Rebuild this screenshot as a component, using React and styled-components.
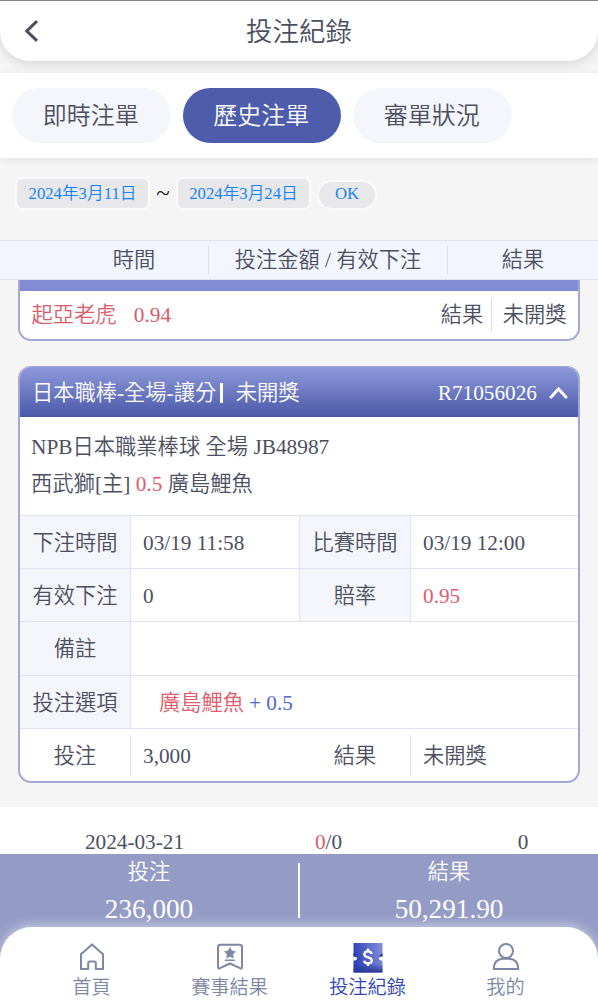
import React from "react";
import styled, { createGlobalStyle } from "styled-components";

const Global = createGlobalStyle`
  * { box-sizing: border-box; }
  html, body { margin: 0; padding: 0; }
  body {
    background: #f5f5f5;
    color: #4c4f5f;
    font-family: "Liberation Serif", "Noto Sans CJK TC", serif;
    font-weight: 350;
    font-size: 21.25px;
    line-height: 30px;
    overflow: hidden;
  }
  button { font: inherit; color: inherit; border: 0; padding: 0; }
`;

const Screen = styled.div`
  width: 598px;
  height: 1000px;
  display: flex;
  flex-direction: column;
  overflow: hidden;
  border-top: 1px solid #858488;
`;

const Header = styled.header`
  display: grid;
  grid-template-columns: 60px 1fr 60px;
  align-items: center;
  flex: none;
  height: 60px;
  background: #fff;
  border-radius: 0 0 30px 30px;
  box-shadow: 0 3px 12px rgba(0, 0, 0, 0.13);
`;

const BackButton = styled.button`
  display: flex;
  background: none;
  padding-left: 24px;
`;

const Title = styled.h1`
  margin: 0;
  padding-top: 2px;
  font-size: 26.5px;
  font-weight: 350;
  text-align: center;
`;

const Tabs = styled.nav`
  display: flex;
  flex: none;
  gap: 12px;
  height: 85px;
  margin-top: 12px;
  padding: 15px 12px;
  background: #fff;
  box-shadow: 0 2px 8px rgba(0, 0, 0, 0.08);
`;

const Tab = styled.button`
  width: 158.5px;
  height: 55px;
  padding-right: 1px;
  border-radius: 28px;
  font-size: 24px;
  background: ${(p) => (p.$active ? "#4e5cac" : "#f5f6fc")};
  color: ${(p) => (p.$active ? "#fff" : "#4c4f5f")};
`;

const Filter = styled.div`
  display: flex;
  align-items: flex-end;
  flex: none;
  height: 52px;
  padding-left: 15px;
  font-size: 16.7px;
`;

const FilterButton = styled.button`
  width: ${(p) => (p.$round ? 60 : 135)}px;
  height: ${(p) => (p.$round ? 30 : 33)}px;
  margin-left: ${(p) => (p.$round ? 6 : 0)}px;
  padding-bottom: ${(p) => (p.$round ? 2 : 0)}px;
  border: 2px solid #fafafa;
  border-radius: ${(p) => (p.$round ? 15 : 7)}px;
  background: #e8e8ea;
  color: #1583fb;
  line-height: ${(p) => (p.$round ? 24 : 29)}px;
`;

const Tilde = styled.span`
  width: 26px;
  text-align: center;
  color: #222;
  font-size: 25px;
  line-height: 34px;
`;

const Columns = styled.div`
  display: grid;
  grid-template-columns: 209px 239px 150px;
  align-items: center;
  flex: none;
  height: 40px;
  margin-top: 30px;
  background: #f3f6fe;
  border: solid #dfe2f5;
  border-width: 1px 0;
`;

const Column = styled.div`
  height: 28px;
  line-height: 28px;
  text-align: center;
  padding-left: ${(p) => p.$indent || 0}px;
  border-right: ${(p) => (p.$last ? 0 : 1)}px solid #d9dcf1;
`;

const Card = styled.section`
  flex: none;
  width: 562px;
  margin: ${(p) => (p.$continued ? "0" : "25px")} 0 0 18px;
  border: 2px solid #a2a8d3;
  border-top-width: ${(p) => (p.$continued ? 0 : 1)}px;
  border-radius: ${(p) => (p.$continued ? "0 0 13px 13px" : "13px")};
  background: #fff;
  overflow: hidden;
`;

const CardStrip = styled.div`
  height: 11px;
  background: #818cd5;
`;

const CardResult = styled.div`
  display: flex;
  align-items: center;
  height: 48px;
  padding: 0 11.5px;
`;

const Pick = styled.span`
  flex: 1;
  color: #da5b6b;
  word-spacing: 12px;
`;

const Outcome = styled.span`
  padding-left: 11px;
  margin-left: 7.5px;
  border-left: 1px solid #d9dcf1;
  line-height: 34px;
`;

const CardHeader = styled.div`
  display: flex;
  align-items: center;
  height: 50px;
  padding: 2px 10px 0 12px;
  color: #fff;
  background: linear-gradient(#8e99dc, #7480c6 40%, #4958a9);
`;

const Divider = styled.i`
  width: 3px;
  height: 20px;
  margin: 0 12.5px 0 4px;
  background: #fff;
`;

const TicketNo = styled.span`
  margin-left: auto;
  padding-right: 12px;
`;

const Match = styled.div`
  height: 98px;
  padding: 12px 11px;
  font-size: 21.3px;
  line-height: 37px;
`;

const Red = styled.span`
  color: #e25a6c;
`;

const Blue = styled.span`
  color: #5065e0;
`;

const Row = styled.div`
  display: grid;
  grid-template-columns: ${(p) => (p.$wide ? "111px 1fr" : "111px 169px 111px 1fr")};
  height: 53.2px;
  border-top: 1px solid #dfe1f7;
  ${(p) => p.$plain && "padding: 5px 0;"}
`;

const Label = styled.div`
  display: flex;
  align-items: center;
  justify-content: center;
  padding-top: 2px;
  background: ${(p) => (p.$plain ? "#fff" : "#f5f6fb")};
  border-right: 1px solid #dfe1f7;
`;

const Value = styled.div`
  display: flex;
  align-items: center;
  gap: 5px;
  padding: 2px 0 0 ${(p) => p.$indent || 12}px;
  border-right: ${(p) => (p.$line ? 1 : 0)}px solid #dfe1f7;
`;

const DayRow = styled.div`
  display: grid;
  grid-template-columns: 209px 239px 150px;
  align-items: end;
  flex: none;
  height: 47px;
  margin-top: 24px;
  background: #fff;
`;

const DayCell = styled.div`
  text-align: center;
  line-height: 24px;
  padding-left: ${(p) => p.$indent || 0}px;
`;

const Summary = styled.div`
  display: flex;
  flex: none;
  height: 147px;
  background: #949bc5;
  color: #fff;
`;

const Total = styled.div`
  flex: 1;
  padding-top: 3px;
  text-align: center;
`;

const Amount = styled.div`
  margin-top: 7px;
  font-size: 27.2px;
`;

const SummaryLine = styled.div`
  width: 2px;
  height: 55px;
  margin-top: 9px;
  background: #fff;
`;

const BottomNav = styled.nav`
  position: relative;
  display: flex;
  flex: none;
  height: 74px;
  margin-top: -74px;
  padding: 0 23.5px 0 22.5px;
  background: #fff;
  border-radius: 32px 32px 0 0;
  box-shadow: 0 -2px 11px rgba(255, 255, 255, 0.5);
`;

const NavItem = styled.a`
  display: flex;
  flex: 1;
  flex-direction: column;
  align-items: center;
  gap: -1px;
  padding-top: 16px;
  font-size: 19.2px;
  line-height: 28px;
  color: ${(p) => (p.$active ? "#3044bb" : "#7d88a4")};
`;

const IconBox = styled.svg`
  width: 30px;
  height: 31px;
  flex: none;
  fill: none;
  stroke: currentColor;
  stroke-width: 2;
  stroke-linejoin: round;
  stroke-linecap: round;
`;

const Chevron = styled.svg`
  flex: none;
  fill: none;
  stroke: ${(p) => p.$color};
  stroke-width: 3;
`;

const details = [
  ["下注時間", "03/19 11:58", "比賽時間", "03/19 12:00"],
  ["有效下注", "0", "賠率", <Red key="odds">0.95</Red>],
];

export default function App() {
  return (
    <Screen>
      <Global />
      <Header>
        <BackButton aria-label="返回">
          <Chevron $color="#4c4f5f" width="15" height="23" viewBox="0 0 15 23">
            <path d="M13 1.2 2.8 11 13 20.8" />
          </Chevron>
        </BackButton>
        <Title>投注紀錄</Title>
      </Header>
      <Tabs>
        <Tab>即時注單</Tab>
        <Tab $active>歷史注單</Tab>
        <Tab>審單狀況</Tab>
      </Tabs>
      <Filter>
        <FilterButton>2024年3月11日</FilterButton>
        <Tilde>~</Tilde>
        <FilterButton>2024年3月24日</FilterButton>
        <FilterButton $round>OK</FilterButton>
      </Filter>
      <Columns>
        <Column $indent={60}>時間</Column>
        <Column>投注金額 / 有效下注</Column>
        <Column $last>結果</Column>
      </Columns>
      <Card $continued>
        <CardStrip />
        <CardResult>
          <Pick>起亞老虎 0.94</Pick>
          <span>結果</span>
          <Outcome>未開獎</Outcome>
        </CardResult>
      </Card>
      <Card>
        <CardHeader>
          <span>日本職棒-全場-讓分</span>
          <Divider />
          <span>未開獎</span>
          <TicketNo>R71056026</TicketNo>
          <Chevron $color="#fff" width="19" height="14" viewBox="0 0 19 14">
            <path d="M1.2 12 9.5 3 17.8 12" />
          </Chevron>
        </CardHeader>
        <Match>
          <div>NPB日本職業棒球 全場 JB48987</div>
          <div>西武獅[主] <Red>0.5</Red> 廣島鯉魚</div>
        </Match>
        {details.map(([a, b, c, d]) => (
          <Row key={a}>
            <Label>{a}</Label>
            <Value $line>{b}</Value>
            <Label>{c}</Label>
            <Value>{d}</Value>
          </Row>
        ))}
        <Row $wide>
          <Label>備註</Label>
          <Value />
        </Row>
        <Row $wide>
          <Label>投注選項</Label>
          <Value $indent={28}>
            <Red>廣島鯉魚</Red>
            <Blue>+ 0.5</Blue>
          </Value>
        </Row>
        <Row $plain>
          <Label $plain>投注</Label>
          <Value>3,000</Value>
          <Label $plain>結果</Label>
          <Value>未開獎</Value>
        </Row>
      </Card>
      <DayRow>
        <DayCell $indent={60}>2024-03-21</DayCell>
        <DayCell><Red>0</Red>/0</DayCell>
        <DayCell>0</DayCell>
      </DayRow>
      <Summary>
        <Total>
          投注
          <Amount>236,000</Amount>
        </Total>
        <SummaryLine />
        <Total>
          結果
          <Amount>50,291.90</Amount>
        </Total>
      </Summary>
      <BottomNav>
        <NavItem>
          <IconBox viewBox="0 0 30 31">
            <path d="M4 11.2 15 1.4 26 11.2V26H18.8V20Q18.8 18.5 17.3 18.5H12.7Q11.2 18.5 11.2 20V26H4Z" />
          </IconBox>
          首頁
        </NavItem>
        <NavItem>
          <IconBox viewBox="0 0 30 31">
            <path d="M5.5 1.8H24.5Q27 1.8 27 4.3V24Q27 26 25 25.2L15 20.5 5 25.2Q3 26 3 24V4.3Q3 1.8 5.5 1.8Z" />
            <path d="m15 4.5 1.8 3.3 3.8.7-2.7 2.8.5 3.8-3.4-1.7-3.4 1.7.5-3.8-2.7-2.8 3.8-.7Z" fill="currentColor" strokeWidth="0.5" />
            <path d="M10.5 17.3H19.5" strokeWidth="1.5" />
          </IconBox>
          賽事結果
        </NavItem>
        <NavItem $active>
          <IconBox viewBox="0 0 30 31">
            <defs>
              <linearGradient id="ticket" x1="0" y1="0.2" x2="1" y2="0">
                <stop offset="0" stopColor="#3044b6" />
                <stop offset="1" stopColor="#8590dc" />
              </linearGradient>
              <linearGradient id="ticketShade" x1="0" y1="0" x2="0" y2="1">
                <stop offset="0.7" stopColor="#2b3c9f" stopOpacity="0" />
                <stop offset="1" stopColor="#26378f" />
              </linearGradient>
            </defs>
            <path d="M.5 0H29.5V13.5Q26 13.5 26 15.5T29.5 17.5V29.5H.5V17.5Q4 17.5 4 15.5T.5 13.5Z" fill="url(#ticket)" stroke="none" />
            <path d="M.5 0H29.5V13.5Q26 13.5 26 15.5T29.5 17.5V29.5H.5V17.5Q4 17.5 4 15.5T.5 13.5Z" fill="url(#ticketShade)" stroke="none" />
            <path d="M.5 10 4 13.5H.5ZM29.5 10 26 13.5H29.5Z" fill="#27367f" stroke="none" />
            <path d="M18.7 11Q18 8.4 15 8.4 11.3 8.4 11.3 11.2 11.3 13.5 15 14.3 18.8 15.1 18.8 17.6 18.8 20.3 15 20.3 11.4 20.3 11.2 17.6M15 5.5V8.4M15 20.3V23" stroke="#fff" strokeWidth="2.3" strokeLinecap="butt" />
          </IconBox>
          投注紀錄
        </NavItem>
        <NavItem>
          <IconBox viewBox="0 0 30 31">
            <circle cx="15" cy="8" r="7" />
            <path d="M2.7 26Q3 16.1 12 15.8H18Q27 16.1 27.3 26Z" />
          </IconBox>
          我的
        </NavItem>
      </BottomNav>
    </Screen>
  );
}
